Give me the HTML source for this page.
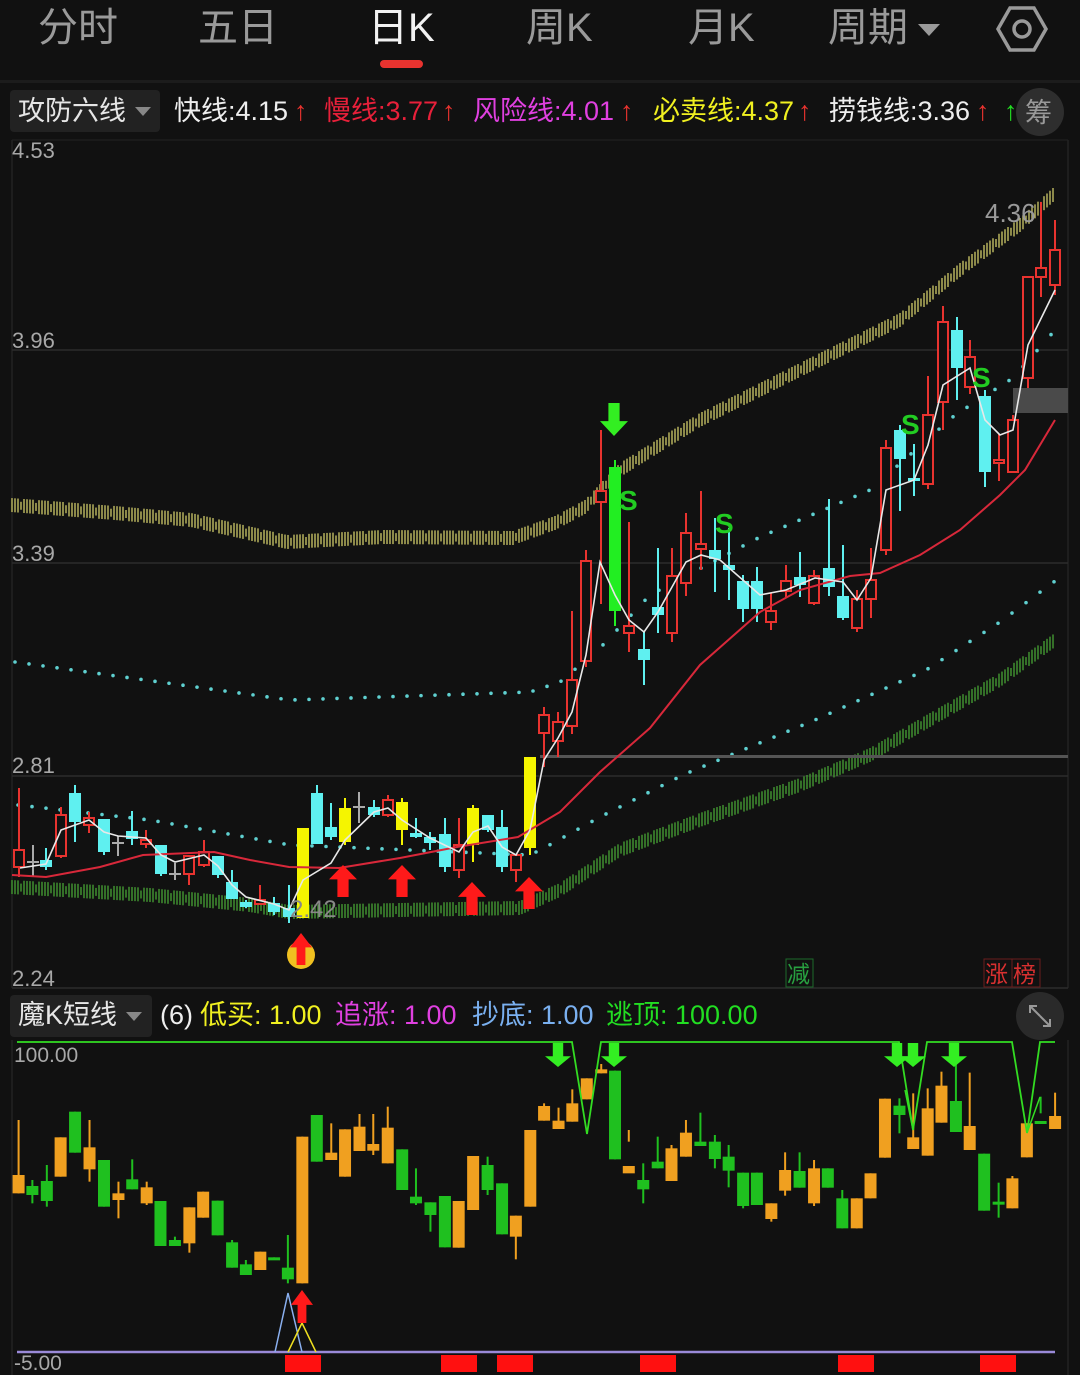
<!DOCTYPE html>
<html><head><meta charset="utf-8">
<style>
html,body{margin:0;padding:0;background:#111;}
body{width:1080px;height:1375px;overflow:hidden;position:relative;font-family:"Liberation Sans","Noto Sans CJK SC",sans-serif;}
.tab{position:absolute;top:2px;font-size:40px;color:#9a9a9a;line-height:52px;}
svg text{font-family:"Liberation Sans","Noto Sans CJK SC",sans-serif;}
</style></head>
<body>
<div class="tab" style="left:38px">分时</div>
<div class="tab" style="left:198px">五日</div>
<div class="tab" style="left:368px;color:#f2f2f2">日K</div>
<div class="tab" style="left:526px">周K</div>
<div class="tab" style="left:688px">月K</div>
<div class="tab" style="left:828px">周期</div>
<div style="position:absolute;left:380px;top:60px;width:43px;height:8px;border-radius:4px;background:#e8332f"></div>
<svg id="s" width="1080" height="1375" style="position:absolute;left:0;top:0" xmlns="http://www.w3.org/2000/svg"></svg>
<script>
var S=document.getElementById('s');var h='';
function L(x1,y1,x2,y2,c,w){h+='<line x1="'+x1+'" y1="'+y1+'" x2="'+x2+'" y2="'+y2+'" stroke="'+c+'" stroke-width="'+(w||1)+'"/>';}
function R(x,y,w,hh,f,st){h+='<rect x="'+x+'" y="'+y+'" width="'+w+'" height="'+hh+'" fill="'+f+'"'+(st?' stroke="'+st+'" stroke-width="2"':'')+'/>';}
function T(x,y,s,c,t,a){h+='<text x="'+x+'" y="'+y+'" font-size="'+s+'" fill="'+c+'"'+(a?' '+a:'')+'>'+t+'</text>';}
function P(pts,c,w){h+='<polyline fill="none" stroke="'+c+'" stroke-width="'+w+'" points="'+pts.map(function(p){return p.join(',')}).join(' ')+'"/>';}
function interp(pts,x){for(var i=0;i<pts.length-1;i++){if(x>=pts[i][0]&&x<=pts[i+1][0]){var t=(x-pts[i][0])/(pts[i+1][0]-pts[i][0]);return pts[i][1]+t*(pts[i+1][1]-pts[i][1]);}}return null;}
R(0,80,1080,3,'#1c1c1c');
h+='<polygon points="1010,8 1034,8 1046,29 1034,50 1010,50 998,29" fill="none" stroke="#9a9a9a" stroke-width="3.5"/><circle cx="1022" cy="29" r="8" fill="none" stroke="#9a9a9a" stroke-width="3.5"/>';
h+='<polygon points="918,24 940,24 929,36" fill="#9a9a9a"/>';
h+='<rect x="10" y="90" width="150" height="42" rx="4" fill="#222"/>';
T(18,120,27,'#e6e6e6','攻防六线');h+='<polygon points="135,107 151,107 143,116" fill="#888"/>';
T(174,120,27,'#eee','快线:4.15');T(294,120,27,'#e8332f','↑');
T(324,120,27,'#e8203a','慢线:3.77');T(442,120,27,'#e8332f','↑');
T(473,120,27,'#e040e0','风险线:4.01');T(620,120,27,'#e8332f','↑');
T(653,120,27,'#f0f020','必卖线:4.37');T(798,120,27,'#e8332f','↑');
T(829,120,27,'#eee','捞钱线:3.36');T(976,120,27,'#e8332f','↑');T(1004,120,27,'#22dd22','↑');
h+='<circle cx="1040" cy="112" r="24" fill="#2e2e2e"/>';T(1025,122,27,'#999','筹');
L(12,140,12,988,'#2a2a2a');L(1068,140,1068,988,'#2a2a2a');
[350,563,776,988].forEach(function(y){L(12,y,1068,y,'#2c2c2c',1.5);});
L(12,140,1068,140,'#222');
T(12,158,22,'#a8a8a8','4.53');T(12,348,22,'#a8a8a8','3.96');T(12,561,22,'#a8a8a8','3.39');T(12,773,22,'#a8a8a8','2.81');T(12,986,22,'#a8a8a8','2.24');
var ub=[[11,505],[115,513],[191,520],[287,542],[383,537],[513,538],[555,523],[585,507],[620,470],[700,420],[800,370],[900,320],[960,270],[1020,225],[1053,195]];
var lb=[[11,887],[150,895],[250,905],[289,912],[400,910],[520,908],[560,890],[620,850],[700,820],[800,785],[870,755],[930,720],[1000,680],[1055,640]];
for(var x=12;x<=1056;x+=3){var y=interp(ub,x);if(y!=null){var k=(Math.floor(x/3)%5==2)?4:7;L(x,y-k,x,y+k,'#c2bd62',1.4);}
var y2=interp(lb,x);if(y2!=null){var k2=(Math.floor(x/3)%5==2)?4:7;L(x,y2-k2,x,y2+k2,'#449a32',1.4);}}
function dots(pts,step){for(var x=pts[0][0];x<=pts[pts.length-1][0];x+=step){var y=interp(pts,x);h+='<circle cx="'+x+'" cy="'+y+'" r="1.8" fill="#5fd0d0"/>';}}
dots([[15,662],[290,700],[530,692],[560,682],[600,648],[650,595],[760,537],[870,490],[955,415],[1013,378],[1055,330]],14);
dots([[18,805],[150,820],[290,845],[530,855],[544,848],[600,817],[685,774],[815,720],[926,670],[1000,622],[1055,581]],14);
R(540,755,528,3,'#555');R(1013,388,55,25,'#4a4a4a');
var C=[[19,850,867,788,877,'r'],[33,862,864,845,877,'w'],[46,860,867,848,870,'c'],[61,815,856,807,858,'r'],[75,793,822,785,842,'c'],[89,818,825,812,833,'r'],[104,819,852,819,855,'c'],[118,843,845,836,856,'w'],[132,831,839,811,845,'c'],[146,840,844,830,848,'r'],[161,845,874,845,876,'c'],[175,874,876,863,880,'w'],[189,856,874,856,885,'r'],[204,852,865,840,867,'r'],[218,856,875,856,878,'c'],[232,882,899,870,899,'c'],[246,902,907,900,908,'c'],[260,900,904,885,905,'r'],[274,903,912,897,915,'c'],[289,908,917,885,923,'c'],[303,828,918,828,918,'y'],[317,793,844,785,844,'c'],[331,827,837,803,840,'c'],[345,808,842,798,845,'y'],[359,807,809,792,823,'w'],[374,807,815,800,817,'c'],[388,800,815,795,817,'r'],[402,802,830,798,845,'y'],[416,833,837,818,838,'c'],[430,837,843,832,850,'c'],[445,834,867,818,872,'c'],[459,845,870,818,878,'r'],[473,808,845,805,862,'y'],[488,815,830,815,832,'c'],[502,827,867,810,872,'c'],[516,855,870,855,882,'r'],[530,757,848,757,855,'y'],
[544,715,733,707,767,'r'],[558,722,741,712,757,'r'],[572,680,726,611,734,'r'],[586,561,661,550,667,'r'],[601,491,502,430,604,'r'],[615,467,611,460,626,'g'],[629,626,633,522,652,'r'],[644,649,660,631,685,'c'],[658,607,615,548,633,'c'],[672,576,633,548,642,'r'],[686,533,583,513,596,'r'],[701,544,549,491,570,'r'],[715,550,559,518,592,'c'],[729,565,570,528,600,'c'],[743,581,609,575,622,'c'],[757,581,609,567,622,'c'],[771,611,622,593,630,'r'],[786,581,591,565,597,'r'],[800,577,585,552,597,'c'],[814,576,603,570,605,'r'],[829,568,587,499,596,'c'],[843,596,618,545,620,'c'],[857,599,628,590,632,'r'],[871,580,599,548,618,'r'],[886,448,550,440,555,'r'],[900,430,459,425,511,'c'],[914,478,481,444,496,'c'],[928,415,484,376,489,'r'],[943,322,402,306,430,'r'],[957,330,368,317,400,'c'],[970,357,387,340,394,'r'],[985,396,472,390,487,'c'],[999,460,463,434,481,'r'],[1013,420,472,415,472,'r'],[1028,277,378,277,388,'r'],[1041,268,277,202,297,'r'],[1055,250,285,220,295,'r']];
var col={r:'#e8332f',c:'#5ff0f0',y:'#f5f500',g:'#22ee22',w:'#aaaaaa'};
C.forEach(function(c){var x=c[0],cl=col[c[5]];L(x,c[3],x,c[4],cl,2);
 if(c[5]=='r'){R(x-5,c[1],10,Math.max(2,c[2]-c[1]),'#111',cl);}
 else if(c[5]=='w'){L(x-6,c[1],x+6,c[1],cl,2);}
 else R(x-6,c[1],12,Math.max(3,c[2]-c[1]),cl);});
P([[12,875],[46,877],[100,867],[143,855],[214,852],[250,860],[289,867],[339,868],[400,858],[457,847],[518,837],[560,812],[600,772],[650,728],[700,665],[760,612],[800,590],[850,576],[880,573],[920,555],[960,530],[1000,495],[1025,470],[1055,420]],'#d8283a',2);
P([[20,868],[46,864],[61,830],[89,820],[104,832],[118,836],[146,838],[161,855],[175,862],[204,855],[218,866],[232,885],[246,897],[274,904],[289,910],[303,880],[331,863],[345,840],[374,812],[388,808],[402,820],[430,838],[459,852],[473,832],[488,826],[502,847],[516,855],[530,830],[544,760],[558,738],[572,712],[586,655],[600,562],[615,595],[629,620],[644,632],[658,612],[686,562],[701,555],[720,560],[760,595],[786,590],[815,578],[843,582],[857,600],[871,578],[886,490],[914,480],[928,445],[943,385],[970,368],[985,420],[1000,435],[1013,430],[1028,345],[1055,290]],'#e8e8e8',1.6);
function up(x,y,w,hh,c){var hw=w/2;h+='<polygon points="'+x+','+y+' '+(x+hw)+','+(y+hh*0.45)+' '+(x+hw*0.4)+','+(y+hh*0.45)+' '+(x+hw*0.4)+','+(y+hh)+' '+(x-hw*0.4)+','+(y+hh)+' '+(x-hw*0.4)+','+(y+hh*0.45)+' '+(x-hw)+','+(y+hh*0.45)+'" fill="'+c+'"/>';}
function dn(x,y,w,hh,c){var hw=w/2;h+='<polygon points="'+x+','+(y+hh)+' '+(x+hw)+','+(y+hh*0.55)+' '+(x+hw*0.4)+','+(y+hh*0.55)+' '+(x+hw*0.4)+','+y+' '+(x-hw*0.4)+','+y+' '+(x-hw*0.4)+','+(y+hh*0.55)+' '+(x-hw)+','+(y+hh*0.55)+'" fill="'+c+'"/>';}
up(343,865,28,32,'#ff1a1a');up(402,865,28,32,'#ff1a1a');up(472,882,28,33,'#ff1a1a');up(529,877,28,32,'#ff1a1a');
h+='<circle cx="301" cy="955" r="14" fill="#f0c020"/>';up(301,933,22,32,'#ff1a1a');
dn(614,403,28,33,'#33ee22');
T(619,510,28,'#22cc22','S','font-weight="bold"');T(715,533,28,'#22cc22','S','font-weight="bold"');T(901,434,28,'#22cc22','S','font-weight="bold"');T(972,387,28,'#22cc22','S','font-weight="bold"');
T(985,222,26,'#999','4.36');T(290,917,24,'#888','2.42');
h+='<rect x="786" y="959" width="27" height="28" fill="none" stroke="#1d6a2a"/>';T(787,982,23,'#28a040','减');
h+='<rect x="984" y="959" width="28" height="28" fill="none" stroke="#6a1d1d"/><rect x="1012" y="959" width="28" height="28" fill="none" stroke="#6a1d1d"/>';T(985,982,23,'#d83030','涨');T(1013,982,23,'#d83030','榜');
h+='<rect x="10" y="995" width="142" height="42" rx="4" fill="#222"/>';T(18,1024,27,'#e6e6e6','魔K短线');h+='<polygon points="126,1012 142,1012 134,1021" fill="#888"/>';
T(160,1024,27,'#eee','(6)');T(200,1024,27,'#f0f020','低买: 1.00');T(335,1024,27,'#e040e0','追涨: 1.00');T(472,1024,27,'#7ab0f0','抄底: 1.00');T(606,1024,27,'#22dd22','逃顶: 100.00');
h+='<circle cx="1040" cy="1016" r="24" fill="#2a2a2a"/>';L(1030,1006,1040,1016,'#999',2);L(1040,1016,1050,1026,'#999',2);
h+='<polyline points="1030,1013 1030,1006 1037,1006" fill="none" stroke="#999" stroke-width="2"/><polyline points="1050,1019 1050,1026 1043,1026" fill="none" stroke="#999" stroke-width="2"/>';
L(12,1040,12,1375,'#2a2a2a');L(1068,1040,1068,1375,'#2a2a2a');
T(14,1062,21,'#a8a8a8','100.00');T(14,1370,21,'#a8a8a8','-5.00');
var D=[[27,405,460,240,460,'o'],[47,438,465,420,490,'g'],[68,423,483,375,500,'g'],[88,292,410,292,410,'o'],[109,215,338,215,338,'g'],[130,322,388,240,425,'o'],[151,360,500,360,500,'g'],[172,460,480,425,535,'o'],[192,418,448,358,448,'g'],[213,442,490,425,495,'o'],[233,483,618,483,618,'g'],[254,600,618,590,618,'g'],[275,502,610,502,638,'o'],[295,455,533,455,533,'o'],[316,482,586,482,586,'g'],[337,607,683,600,683,'g'],[357,673,705,660,705,'g'],[378,635,690,635,690,'o'],[398,652,657,652,657,'g'],[418,683,718,585,730,'g'],[439,290,730,290,730,'o'],[460,225,365,225,365,'g'],[481,338,360,250,360,'o'],[501,268,410,268,410,'o'],[522,260,333,222,333,'o'],[542,312,332,222,345,'o'],[563,263,370,200,370,'o'],[584,328,450,328,450,'g'],[604,470,490,385,495,'g'],[625,487,525,487,575,'g'],[646,468,622,468,622,'g'],[666,483,623,483,623,'o'],[687,348,510,348,510,'o'],[708,375,450,350,465,'g'],[729,430,583,430,583,'g'],[749,527,590,527,658,'o'],[770,270,500,270,500,'o'],[790,198,242,190,242,'o'],[811,242,267,203,267,'o'],[831,190,245,148,245,'o'],[852,115,178,115,178,'o'],[873,88,100,72,100,'o'],[893,92,358,92,358,'g'],[913,378,400,270,305,'o'],[934,420,448,370,490,'g'],[955,365,385,290,385,'g'],[975,325,423,315,423,'o'],[996,278,350,240,350,'o'],[1017,305,318,218,318,'g'],[1038,305,357,285,385,'g'],[1058,350,392,315,442,'g'],[1079,398,498,398,505,'g'],[1099,398,495,398,495,'g'],[1120,490,537,490,545,'o'],[1140,390,452,337,467,'o'],[1161,393,443,337,443,'g'],[1182,385,490,360,498,'o'],[1202,385,443,385,443,'g'],[1223,475,565,450,565,'g'],[1244,475,565,475,565,'o'],[1264,400,475,400,475,'o'],[1285,176,353,176,353,'o'],[1306,197,225,175,280,'g'],[1326,292,327,160,327,'o'],[1347,205,347,145,347,'o'],[1367,137,248,95,248,'o'],[1388,183,276,55,276,'g'],[1408,258,330,98,330,'o'],[1429,341,512,341,512,'g'],[1450,485,490,428,533,'g'],[1470,415,505,408,505,'o'],[1491,250,352,250,352,'o'],[1511,243,248,170,220,'g'],[1532,228,267,158,267,'o']];
function zx(v){return v/1.452;}function zy(v){return 1040+v/3;}
D.forEach(function(d){var x=zx(d[0]),c=d[5]=='o'?'#f0a020':'#1fc01f';L(x,zy(d[3]),x,zy(d[4]),c,2);R(x-6,zy(d[1]),12,Math.max(3,(d[2]-d[1])/3),c);});
P([[17,1042],[572,1042],[587,1134],[601,1042],[899,1042],[913,1130],[927,1042],[1012,1042],[1027,1133],[1040,1042],[1055,1042]],'#33dd22',1.8);
L(1027,1133,1040,1097,'#33dd22',1.5);L(913,1130,905,1090,'#33dd22',1.5);
[558,614,897,913,954].forEach(function(x){dn(x,1043,26,24,'#33ee22');});
L(17,1352,1055,1352,'#9a8ad8',2.5);
P([[275,1352],[288,1293],[302,1352]],'#8ab0f0',1.5);P([[288,1352],[302,1323],[316,1352]],'#f0e020',1.5);
up(302,1290,22,33,'#ff1a1a');
[285,441,497,640,838,980].forEach(function(x){R(x,1355,36,17,'#ff1010');});
S.innerHTML=h;
</script>
</body></html>
